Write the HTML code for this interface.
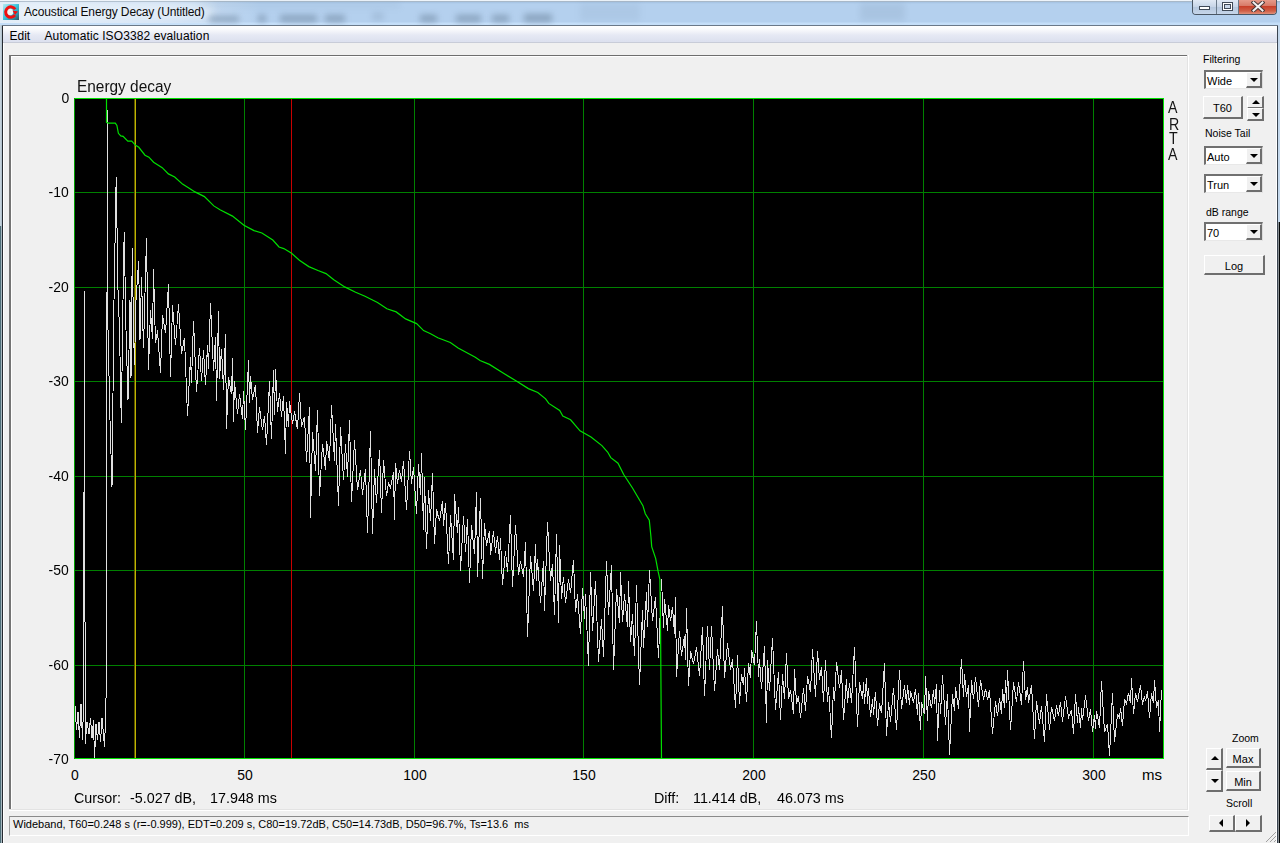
<!DOCTYPE html>
<html><head><meta charset="utf-8">
<style>
html,body{margin:0;padding:0;}
body{width:1280px;height:843px;overflow:hidden;position:relative;background:#f0f0f0;font-family:"Liberation Sans",sans-serif;color:#000;}
.a{position:absolute;}
.t{position:absolute;white-space:pre;line-height:1;}
#title{left:0;top:0;width:1280px;height:25px;background:linear-gradient(#eef4fa 0,#eef4fa 1px,#a8b8c8 1px,#a8b8c8 2px,#a4c2e2 2px,#b4d0ee 4px,#b4d0ee 22px,#c4def8 23px,#c4def8 24px);overflow:hidden;}
.blob{position:absolute;background:#7890aa;filter:blur(3px);opacity:.7;}
#menu{left:3px;top:26px;width:1274px;height:17px;background:linear-gradient(#ffffff 0,#fafbfd 3px,#e6e9f4 9px,#dde1ef 15px,#dde1ef 16px);}
.lbl{font-size:10.5px;}
.combo{position:absolute;width:59px;height:19px;background:#fff;box-sizing:border-box;border-top:2px solid #707070;border-left:2px solid #707070;border-right:1px solid #dcdcdc;border-bottom:1px solid #e8e8e8;}
.combo .v{position:absolute;left:1px;top:3px;font-size:11px;}
.combo .dd{position:absolute;right:0;top:0;width:16px;height:16px;box-sizing:border-box;background:#f0f0f0;border-right:2px solid #6e6e6e;border-bottom:2px solid #6e6e6e;border-top:1px solid #fff;border-left:1px solid #fff;}
.tri-d{position:absolute;width:0;height:0;border-left:4px solid transparent;border-right:4px solid transparent;border-top:4px solid #000;}
.tri-u{position:absolute;width:0;height:0;border-left:4px solid transparent;border-right:4px solid transparent;border-bottom:4px solid #000;}
.tri-l{position:absolute;width:0;height:0;border-top:4px solid transparent;border-bottom:4px solid transparent;border-right:4px solid #000;}
.tri-r{position:absolute;width:0;height:0;border-top:4px solid transparent;border-bottom:4px solid transparent;border-left:4px solid #000;}
.btn{position:absolute;box-sizing:border-box;background:#f0f0f0;border-top:1px solid #fff;border-left:1px solid #fff;border-right:2px solid #6e6e6e;border-bottom:2px solid #6e6e6e;}
.btn .c{position:absolute;left:0;right:0;text-align:center;font-size:11px;}
.ax{font-size:15px;}
</style></head><body>

<!-- title bar -->
<div id="title" class="a">
  <div class="a" style="left:0;top:2px;width:260px;height:21px;background:linear-gradient(90deg,rgba(235,243,250,.85),rgba(225,236,248,.7) 60%,rgba(210,228,246,0) 100%);"></div>
  <div class="a" style="left:14px;top:4px;width:200px;height:16px;background:rgba(240,246,252,.55);filter:blur(4px);border-radius:8px;"></div>
  <div class="blob" style="left:209px;top:16px;width:30px;height:6px;"></div>
  <div class="blob" style="left:258px;top:15px;width:8px;height:7px;"></div>
  <div class="blob" style="left:280px;top:15px;width:37px;height:7px;"></div>
  <div class="blob" style="left:325px;top:15px;width:20px;height:7px;"></div>
  <div class="blob" style="left:372px;top:13px;width:12px;height:7px;opacity:.3"></div>
  <div class="blob" style="left:420px;top:15px;width:17px;height:7px;"></div>
  <div class="blob" style="left:456px;top:15px;width:25px;height:7px;"></div>
  <div class="blob" style="left:492px;top:15px;width:17px;height:7px;"></div>
  <div class="blob" style="left:524px;top:14px;width:28px;height:8px;"></div>
  <div class="blob" style="left:200px;top:2px;width:200px;height:6px;opacity:.12"></div>
  <div class="blob" style="left:580px;top:3px;width:60px;height:18px;opacity:.12"></div>
  <div class="blob" style="left:860px;top:3px;width:45px;height:18px;opacity:.18"></div>
</div>
<!-- app icon -->
<div class="a" style="left:3px;top:4px;width:16px;height:16px;background:linear-gradient(135deg,#b8e8f0,#40c8e0 45%,#2a98b0 75%,#3a5058);"></div>
<svg class="a" style="left:3px;top:4px" width="16" height="16" viewBox="0 0 16 16"><circle cx="7" cy="8" r="3.2" fill="#eef6f6"/><path d="M12.2 5.2A5.2 5.2 0 1 0 12 11.2" fill="none" stroke="#f01010" stroke-width="3"/><path d="M9.5 6.5L15 7.5L12 11Z" fill="#f01010"/></svg>
<div class="t" style="left:24px;top:6px;font-size:12px;letter-spacing:-0.14px;color:#0b0b0b;">Acoustical Energy Decay (Untitled)</div>

<!-- caption buttons -->
<div class="a" style="left:1192px;top:-1px;width:85px;height:16px;border:1px solid #4a5664;border-top:none;border-radius:0 0 4px 4px;box-sizing:border-box;overflow:hidden;">
  <div class="a" style="left:0;top:0;width:23px;height:15px;background:linear-gradient(#e4ecf6,#c8d6e8 50%,#b4c6dc 51%,#c6d6ea);"></div>
  <div class="a" style="left:23px;top:0;width:1px;height:15px;background:#6a7a8a;"></div>
  <div class="a" style="left:24px;top:0;width:21px;height:15px;background:linear-gradient(#e4ecf6,#c8d6e8 50%,#b4c6dc 51%,#c6d6ea);"></div>
  <div class="a" style="left:45px;top:0;width:1px;height:15px;background:#6a7a8a;"></div>
  <div class="a" style="left:46px;top:0;width:39px;height:15px;background:linear-gradient(#e8a090,#d87a68 45%,#c8402a 50%,#d06048 80%,#e0907a);"></div>
  <div class="a" style="left:6px;top:7px;width:11px;height:4px;box-sizing:border-box;background:#fff;border:1px solid #404a58;"></div>
  <div class="a" style="left:29px;top:3px;width:11px;height:9px;box-sizing:border-box;border:1px solid #404a58;background:#fff;"></div><div class="a" style="left:31px;top:5px;width:7px;height:5px;box-sizing:border-box;border:1px solid #404a58;background:#c8d6e8;"></div>
  <svg class="a" style="left:58px;top:2px" width="14" height="11"><path d="M2.5 1.5L11.5 9.5M11.5 1.5L2.5 9.5" stroke="#4a3a3a" stroke-width="4" stroke-linecap="square"/><path d="M2.5 1.5L11.5 9.5M11.5 1.5L2.5 9.5" stroke="#f4f0f0" stroke-width="2" stroke-linecap="square"/></svg>
</div>

<!-- frame -->
<div class="a" style="left:0;top:25px;width:1px;height:201px;background:#c4d2dc;"></div>
<div class="a" style="left:1px;top:25px;width:1px;height:201px;background:#b4c4d0;"></div>
<div class="a" style="left:0;top:226px;width:1px;height:617px;background:#4e6e78;"></div>
<div class="a" style="left:1px;top:226px;width:1px;height:617px;background:#a8b8c0;"></div>
<div class="a" style="left:2px;top:25px;width:1px;height:818px;background:#262a30;"></div>
<div class="a" style="left:3px;top:26px;width:1px;height:817px;background:#fff;"></div>
<div class="a" style="left:1277px;top:25px;width:1px;height:818px;background:#3a4450;"></div>
<div class="a" style="left:1278px;top:25px;width:2px;height:197px;background:#c4d8ec;"></div>
<div class="a" style="left:1278px;top:222px;width:1px;height:621px;background:#8a9094;"></div>
<div class="a" style="left:1279px;top:222px;width:1px;height:621px;background:#050808;"></div>
<div class="a" style="left:1276px;top:26px;width:1px;height:817px;background:#fff;"></div>
<div class="a" style="left:2px;top:25px;width:1276px;height:1px;background:#6a7888;"></div>

<!-- menu -->
<div id="menu" class="a"></div>
<div class="a" style="left:3px;top:42px;width:1274px;height:1px;background:#c8ccd8;"></div>
<div class="t" style="left:9.5px;top:29.5px;font-size:12px;">Edit</div>
<div class="t" style="left:44.5px;top:29.5px;font-size:12px;letter-spacing:0.1px;">Automatic ISO3382 evaluation</div>

<!-- panel frame -->
<div class="a" style="left:9px;top:55px;width:1178px;height:1px;background:#6e6e6e;"></div>
<div class="a" style="left:9px;top:55px;width:2px;height:754px;background:#747474;"></div>
<div class="a" style="left:11px;top:56px;width:1176px;height:1px;background:#fff;"></div>
<div class="a" style="left:11px;top:56px;width:1px;height:753px;background:#fff;"></div>
<div class="a" style="left:1187px;top:55px;width:1px;height:755px;background:#e3e3e3;"></div>
<div class="a" style="left:1188px;top:55px;width:1px;height:756px;background:#fff;"></div>
<div class="a" style="left:9px;top:809px;width:1179px;height:1px;background:#e3e3e3;"></div>
<div class="a" style="left:9px;top:810px;width:1180px;height:1px;background:#fff;"></div>

<!-- chart -->
<div class="a" style="left:74px;top:98px;width:1090px;height:661px;background:#000;"></div>
<svg class="a" style="left:0;top:0" width="1280" height="843" viewBox="0 0 1280 843">
<g shape-rendering="crispEdges"><rect x="244" y="98" width="1" height="661" fill="#008000"/><rect x="414" y="98" width="1" height="661" fill="#008000"/><rect x="583" y="98" width="1" height="661" fill="#008000"/><rect x="753" y="98" width="1" height="661" fill="#008000"/><rect x="923" y="98" width="1" height="661" fill="#008000"/><rect x="1093" y="98" width="1" height="661" fill="#008000"/><rect x="74" y="192" width="1090" height="1" fill="#008000"/><rect x="74" y="287" width="1090" height="1" fill="#008000"/><rect x="74" y="381" width="1090" height="1" fill="#008000"/><rect x="74" y="476" width="1090" height="1" fill="#008000"/><rect x="74" y="570" width="1090" height="1" fill="#008000"/><rect x="74" y="665" width="1090" height="1" fill="#008000"/><rect x="134" y="99" width="1" height="659" fill="#5a5400"/><rect x="135" y="99" width="1" height="659" fill="#c0b400"/><rect x="291" y="99" width="1" height="659" fill="#c80000"/></g>
<path d="M75.0 706.0L76.5 730.0L78.0 712.0L79.5 738.0L81.0 704.0L82.5 740.0L83.5 705.0L84.5 291.0L85.2 744.0L87.0 722.0L89.0 734.0L90.5 718.0L92.0 738.0L93.5 720.0L94.5 759.0L96.0 724.0L97.5 740.0L99.0 722.0L100.5 742.0L102.0 718.0L104.6 747.0L106.2 691.0L107.4 110.0L107.9 240.0L108.0 330.0L110.0 420.0L112.0 487.0L114.0 300.0L116.2 177.0L118.0 290.0L119.5 330.0L121.3 423.0L123.0 300.0L124.2 232.0L126.0 330.0L128.0 400.0L130.0 300.0L131.0 378.0L132.3 248.0L133.5 330.0L134.5 365.0L136.0 300.0L138.6 261.0L140.0 340.0L141.5 277.3L143.5 348.0L146.5 237.7L148.5 370.0L150.5 310.4L152.5 338.5L153.5 269.0L155.5 343.3L157.5 330.5L160.5 372.7L162.5 315.3L165.5 333.2L168.5 284.0L170.5 376.8L172.5 305.1L175.5 345.0L178.5 304.5L181.5 353.7L184.5 338.0L187.5 416.0L190.5 357.2L191.5 382.9L193.5 321.0L196.5 391.8L199.5 347.7L201.5 380.5L203.5 350.3L205.5 385.0L207.5 345.2L208.5 369.0L210.5 303.0L213.5 370.5L215.5 337.1L216.5 401.0L218.5 311.0L219.5 379.2L221.5 348.7L223.5 389.5L225.5 334.5L226.5 428.6L228.5 376.6L231.5 394.3L232.5 357.7L233.5 421.8L234.5 381.3L237.5 413.9L239.5 394.3L242.5 418.7L243.5 391.4L245.5 430.0L248.5 360.4L249.5 402.9L250.5 375.9L252.5 399.9L255.5 385.0L257.5 432.7L259.5 406.6L262.5 430.3L264.5 415.8L266.5 445.0L269.5 381.0L271.5 439.0L273.5 370.0L274.5 415.2L275.5 369.0L277.5 411.7L279.5 393.1L281.5 416.6L283.5 395.6L285.5 454.0L286.5 401.7L288.5 427.0L289.5 401.0L292.5 424.0L294.5 411.5L297.5 429.4L299.5 393.0L301.5 426.7L304.5 416.6L306.5 462.0L309.5 407.0L310.5 518.0L312.5 431.9L315.5 470.6L317.5 410.0L319.5 496.0L322.5 443.9L325.5 470.0L326.5 440.8L329.5 460.8L331.5 405.0L334.5 460.8L335.5 423.6L338.5 506.0L340.5 427.0L343.5 479.6L345.5 444.4L347.5 476.8L349.5 420.0L351.5 502.0L354.5 440.0L357.5 490.3L360.5 470.2L362.5 494.5L365.5 468.8L367.5 533.0L370.5 431.0L372.5 534.0L374.5 469.1L376.5 503.1L379.5 450.0L381.5 513.0L383.5 460.0L386.5 496.4L388.5 482.9L390.5 488.0L393.5 472.5L394.5 520.0L395.5 463.0L397.5 484.0L399.5 469.9L401.5 481.8L403.5 460.8L406.5 510.0L409.5 451.0L411.5 483.9L413.5 466.6L416.5 514.0L418.5 463.8L420.5 495.4L421.5 453.0L423.5 530.0L424.5 477.5L426.5 549.0L428.5 490.5L430.5 520.9L432.5 473.0L434.5 544.0L436.5 509.4L439.5 521.3L442.5 501.0L443.5 526.2L445.5 502.6L448.5 564.0L450.5 514.8L453.5 560.0L454.5 494.0L457.5 532.9L458.5 506.9L460.5 571.0L463.5 515.7L465.5 552.2L467.5 519.3L469.5 583.0L471.5 524.9L474.5 554.2L476.5 492.0L477.5 577.0L480.5 498.0L482.5 579.0L484.5 522.9L486.5 545.8L489.5 530.9L490.5 554.6L493.5 531.3L495.5 552.5L497.5 536.2L499.5 559.6L500.5 538.2L502.5 585.0L505.5 550.9L507.5 572.4L510.5 515.0L512.5 587.0L515.5 525.0L518.5 575.2L520.5 561.1L523.5 576.5L525.5 542.4L527.5 637.0L530.5 555.7L533.5 590.7L535.5 544.4L536.5 580.9L537.5 559.5L540.5 603.0L543.5 561.1L544.5 611.0L547.5 522.0L550.5 580.7L552.5 563.9L554.5 615.0L556.5 534.0L558.5 623.0L559.5 545.0L561.5 598.7L563.5 576.8L565.5 603.0L568.5 579.0L570.5 593.3L573.5 560.0L575.5 612.4L577.5 594.3L580.5 634.0L582.5 587.8L584.5 618.5L585.5 593.8L588.5 666.0L590.5 572.0L592.5 631.2L595.5 581.0L598.5 661.6L601.5 619.0L603.5 656.6L606.5 561.0L608.5 615.2L611.5 565.0L613.5 670.0L616.5 589.5L619.5 623.0L620.5 572.0L622.5 622.0L624.5 594.5L627.5 627.3L628.5 581.0L630.5 642.0L632.5 613.7L634.5 656.0L636.5 585.0L639.5 685.0L642.5 609.9L643.5 648.2L646.5 591.6L647.5 626.7L649.5 570.0L652.5 621.1L655.5 597.2L658.5 658.0L661.5 579.0L663.5 627.9L664.5 598.6L667.5 630.8L668.5 605.1L670.5 621.3L672.5 606.7L674.5 634.0L675.5 597.0L676.5 677.0L679.5 630.8L681.5 655.6L684.5 635.8L685.5 660.3L686.5 608.0L688.5 686.0L690.5 651.0L693.5 664.2L696.5 647.4L699.5 676.0L702.5 627.0L704.5 696.0L707.5 626.0L709.5 669.9L711.5 626.0L714.5 691.0L717.5 649.4L719.5 670.2L722.5 606.0L724.5 678.0L727.5 643.1L730.5 669.7L732.5 659.5L735.5 708.0L737.5 655.0L739.5 704.0L741.5 674.4L743.5 685.3L744.5 668.3L746.5 702.0L748.5 663.4L750.5 678.2L751.5 649.9L754.5 665.0L756.5 621.0L758.5 677.0L759.5 659.2L761.5 688.9L764.5 646.0L766.5 723.0L767.5 660.4L769.5 691.0L772.5 638.0L775.5 710.0L778.5 671.9L780.5 720.0L782.5 674.3L784.5 699.1L786.5 653.0L788.5 699.2L790.5 689.9L793.5 714.0L794.5 669.0L796.5 703.5L798.5 695.8L800.5 718.0L803.5 687.7L805.5 711.0L807.5 676.1L810.5 692.3L812.5 649.0L815.5 697.0L817.5 651.0L819.5 679.8L821.5 666.8L823.5 702.0L825.5 660.0L827.5 702.2L828.5 686.6L831.5 738.0L833.5 687.4L834.5 700.7L836.5 662.0L839.5 688.4L841.5 670.2L843.5 720.0L846.5 678.6L847.5 702.9L849.5 683.5L851.5 702.6L854.5 647.0L857.5 727.0L859.5 682.2L862.5 699.2L863.5 682.3L864.5 704.0L866.5 677.8L867.5 703.7L868.5 688.2L870.5 717.4L872.5 699.0L873.5 714.8L875.5 692.0L877.5 726.0L879.5 703.3L881.5 713.4L884.5 663.0L886.5 736.0L888.5 702.4L890.5 722.3L893.5 687.7L896.5 730.0L899.5 670.0L901.5 708.9L904.5 685.0L906.5 703.0L907.5 685.4L909.5 704.8L910.5 691.6L913.5 702.5L915.5 688.7L917.5 715.0L918.5 692.9L920.5 730.0L921.5 702.1L924.5 714.4L925.5 676.0L927.5 721.1L928.5 691.2L931.5 708.4L933.5 689.6L934.5 704.4L936.5 684.0L937.5 741.0L939.5 690.4L940.5 713.7L942.5 675.0L945.5 725.1L947.5 693.8L949.5 755.0L952.5 694.5L954.5 710.7L955.5 686.7L958.5 709.0L961.5 659.0L963.5 697.0L964.5 674.0L966.5 697.2L968.5 684.7L969.5 732.0L971.5 680.4L973.5 699.4L975.5 677.0L978.5 707.2L980.5 679.9L983.5 699.5L985.5 688.6L987.5 700.2L989.5 690.1L992.5 734.0L995.5 701.4L997.5 716.3L999.5 698.5L1001.5 713.6L1002.5 688.9L1004.5 708.0L1005.5 680.3L1006.5 703.4L1007.5 670.0L1010.5 730.0L1013.5 682.4L1016.5 701.7L1018.5 681.8L1021.5 705.0L1023.5 661.0L1025.5 699.9L1027.5 687.1L1028.5 703.1L1031.5 684.8L1034.5 739.0L1036.5 700.9L1039.5 723.9L1041.5 705.8L1044.5 742.0L1046.5 694.5L1049.5 729.5L1051.5 706.7L1054.5 721.3L1056.5 705.5L1058.5 716.1L1060.5 701.7L1062.5 721.5L1065.5 696.5L1068.5 717.7L1071.5 709.9L1073.5 734.0L1075.5 694.5L1077.5 722.6L1078.5 707.2L1080.5 728.0L1081.5 708.0L1082.5 720.4L1085.5 695.5L1088.5 720.7L1090.5 708.8L1092.5 732.0L1094.5 715.1L1095.5 728.5L1096.5 710.7L1099.5 727.9L1101.5 681.0L1104.5 732.4L1107.5 723.9L1109.5 756.0L1112.5 693.0L1114.5 742.0L1117.5 714.8L1119.5 718.0L1120.5 707.6L1122.5 726.0L1124.5 699.4L1126.5 704.1L1128.5 692.8L1130.5 703.0L1131.5 678.0L1133.5 714.0L1135.5 692.9L1137.5 701.8L1140.5 685.0L1142.5 704.6L1144.5 695.8L1145.5 701.4L1147.5 691.3L1149.5 718.0L1151.5 693.1L1153.5 702.9L1154.5 680.0L1156.5 707.6L1158.5 700.1L1159.5 732.0L1161.5 690.0" fill="none" stroke="#e0e0e0" stroke-width="1" shape-rendering="crispEdges"/>
<path d="M106.5 98.0L106.5 122.3L108.3 123.1L115.3 123.1L116.9 125.5L118.4 133.3L120.8 135.9L123.1 136.4L127.8 141.1L131.7 141.1L135.6 145.3L138.8 147.3L145.0 155.2L148.9 157.2L153.6 162.2L162.2 167.7L168.4 173.9L174.7 177.0L182.5 184.1L188.8 188.0L195.0 191.9L204.4 196.6L213.8 205.9L220.0 209.8L232.5 216.1L243.9 225.2L254.0 230.6L261.9 233.0L272.8 240.0L279.0 247.0L283.8 248.6L291.6 253.3L299.4 260.3L308.8 266.6L318.0 270.5L326.0 273.6L333.8 279.8L344.7 286.9L355.6 292.3L365.0 296.2L377.5 302.5L386.9 308.8L396.2 311.9L405.6 318.9L416.6 323.6L423.6 330.6L430.6 333.8L437.8 337.8L450.3 342.5L458.1 348.0L475.3 357.3L480.0 360.5L489.4 364.4L501.9 372.2L515.9 380.8L528.4 388.6L537.8 392.5L545.6 398.8L548.8 403.4L559.7 410.5L562.8 416.0L570.6 419.8L580.0 430.8L591.0 437.0L601.9 445.6L607.6 452.0L610.8 457.6L618.0 463.2L623.7 474.5L632.5 488.0L642.9 505.7L645.3 513.7L649.3 520.1L650.9 536.2L651.7 546.6L655.7 558.6L658.1 571.4L659.9 579.5L660.6 633.0L661.5 758.5" fill="none" stroke="#00e000" stroke-width="1.2"/>
<g shape-rendering="crispEdges"><rect x="74" y="98" width="1090" height="1" fill="#00e000"/><rect x="74" y="758" width="1090" height="1" fill="#00e000"/><rect x="74" y="98" width="1" height="661" fill="#00a000"/><rect x="1163" y="98" width="1" height="661" fill="#00e000"/></g>
</svg>
<div class="t" style="left:77px;top:78.8px;font-size:15.6px;color:#111;transform:scaleX(0.988);transform-origin:0 50%;">Energy decay</div>

<!-- y labels -->
<div class="t ax" style="right:1211px;top:90px;transform:scaleX(0.93);transform-origin:100% 50%;">0</div>
<div class="t ax" style="right:1211px;top:184px;transform:scaleX(0.93);transform-origin:100% 50%;">-10</div>
<div class="t ax" style="right:1211px;top:279px;transform:scaleX(0.93);transform-origin:100% 50%;">-20</div>
<div class="t ax" style="right:1211px;top:373px;transform:scaleX(0.93);transform-origin:100% 50%;">-30</div>
<div class="t ax" style="right:1211px;top:468px;transform:scaleX(0.93);transform-origin:100% 50%;">-40</div>
<div class="t ax" style="right:1211px;top:562px;transform:scaleX(0.93);transform-origin:100% 50%;">-50</div>
<div class="t ax" style="right:1211px;top:657px;transform:scaleX(0.93);transform-origin:100% 50%;">-60</div>
<div class="t ax" style="right:1211px;top:751px;transform:scaleX(0.93);transform-origin:100% 50%;">-70</div>

<!-- x labels -->
<div class="t ax" style="left:74.5px;top:767px;width:0;"><span style="position:absolute;transform:translateX(-50%) scaleX(0.93)">0</span></div>
<div class="t ax" style="left:244.5px;top:767px;width:0;"><span style="position:absolute;transform:translateX(-50%) scaleX(0.93)">50</span></div>
<div class="t ax" style="left:414.5px;top:767px;width:0;"><span style="position:absolute;transform:translateX(-50%) scaleX(0.93)">100</span></div>
<div class="t ax" style="left:583.5px;top:767px;width:0;"><span style="position:absolute;transform:translateX(-50%) scaleX(0.93)">150</span></div>
<div class="t ax" style="left:753.5px;top:767px;width:0;"><span style="position:absolute;transform:translateX(-50%) scaleX(0.93)">200</span></div>
<div class="t ax" style="left:923.5px;top:767px;width:0;"><span style="position:absolute;transform:translateX(-50%) scaleX(0.93)">250</span></div>
<div class="t ax" style="left:1093.5px;top:767px;width:0;"><span style="position:absolute;transform:translateX(-50%) scaleX(0.93)">300</span></div>
<div class="t ax" style="left:1142px;top:767px;">ms</div>

<!-- ARTA -->
<div class="t" style="left:1168px;top:98.5px;font-size:16.5px;color:#151515;transform:scaleX(0.86);transform-origin:0 0;">A</div>
<div class="t" style="left:1168.5px;top:116px;font-size:16.5px;color:#151515;transform:scaleX(0.86);transform-origin:0 0;">R</div>
<div class="t" style="left:1168.5px;top:129.5px;font-size:16.5px;color:#151515;transform:scaleX(0.86);transform-origin:0 0;">T</div>
<div class="t" style="left:1168px;top:145.5px;font-size:16.5px;color:#151515;transform:scaleX(0.86);transform-origin:0 0;">A</div>

<!-- cursor info -->
<div class="t ax" style="left:74px;top:790px;transform:scaleX(0.955);transform-origin:0 50%;">Cursor:</div>
<div class="t ax" style="left:130px;top:790px;transform:scaleX(0.955);transform-origin:0 50%;">-5.027 dB,</div>
<div class="t ax" style="left:210px;top:790px;transform:scaleX(0.955);transform-origin:0 50%;">17.948 ms</div>
<div class="t ax" style="left:654px;top:790px;transform:scaleX(0.955);transform-origin:0 50%;">Diff:</div>
<div class="t ax" style="left:693px;top:790px;transform:scaleX(0.955);transform-origin:0 50%;">11.414 dB,</div>
<div class="t ax" style="left:777px;top:790px;transform:scaleX(0.955);transform-origin:0 50%;">46.073 ms</div>

<!-- status bar -->
<div class="a" style="left:9px;top:816px;width:1180px;height:20px;box-sizing:border-box;border-top:1px solid #8a8a8a;border-left:1px solid #a0a0a0;border-bottom:1px solid #fff;border-right:1px solid #fff;"></div>
<div class="t" style="left:13px;top:819px;font-size:11px;">Wideband, T60=0.248 s (r=-0.999), EDT=0.209 s, C80=19.72dB, C50=14.73dB, D50=96.7%, Ts=13.6  ms</div>

<!-- right panel -->
<div class="t lbl" style="left:1203px;top:54px;">Filtering</div>
<div class="combo" style="left:1204px;top:70px;"><span class="v">Wide</span><div class="dd"><div class="tri-d" style="left:3px;top:5px;"></div></div></div>
<div class="btn" style="left:1203px;top:96px;width:40px;height:23px;"><span class="c" style="top:5px;">T60</span></div>
<div class="btn" style="left:1247px;top:96px;width:17px;height:13px;"><div class="tri-u" style="left:4px;top:3px;border-left-width:4px;border-right-width:4px;"></div></div>
<div class="btn" style="left:1247px;top:108px;width:17px;height:13px;"><div class="tri-d" style="left:4px;top:4px;"></div></div>
<div class="t lbl" style="left:1205px;top:128px;">Noise Tail</div>
<div class="combo" style="left:1204px;top:146px;"><span class="v">Auto</span><div class="dd"><div class="tri-d" style="left:3px;top:5px;"></div></div></div>
<div class="combo" style="left:1204px;top:174px;"><span class="v">Trun</span><div class="dd"><div class="tri-d" style="left:3px;top:5px;"></div></div></div>
<div class="t lbl" style="left:1206px;top:207px;">dB range</div>
<div class="combo" style="left:1204px;top:222px;"><span class="v">70</span><div class="dd"><div class="tri-d" style="left:3px;top:5px;"></div></div></div>
<div class="btn" style="left:1204px;top:255px;width:61px;height:20px;"><span class="c" style="top:4px;">Log</span></div>

<div class="t lbl" style="left:1232px;top:733px;">Zoom</div>
<div class="btn" style="left:1206px;top:748px;width:17px;height:22px;"><div class="tri-u" style="left:4px;top:7px;"></div></div>
<div class="btn" style="left:1206px;top:770px;width:17px;height:22px;"><div class="tri-d" style="left:4px;top:8px;"></div></div>
<div class="btn" style="left:1226px;top:748px;width:35px;height:20px;"><span class="c" style="top:4px;">Max</span></div>
<div class="btn" style="left:1226px;top:771px;width:35px;height:20px;"><span class="c" style="top:4px;">Min</span></div>
<div class="t lbl" style="left:1226px;top:798px;">Scroll</div>
<div class="btn" style="left:1209px;top:815px;width:26px;height:17px;"><div class="tri-l" style="left:9px;top:3px;"></div></div>
<div class="btn" style="left:1235px;top:815px;width:27px;height:17px;"><div class="tri-r" style="left:10px;top:3px;"></div></div>

<!-- size grip -->
<svg class="a" style="left:1264px;top:830px" width="13" height="13"><path d="M12 2L2 12M12 6L6 12M12 10L10 12" stroke="#a0a0a0" stroke-width="1"/></svg>
</body></html>
